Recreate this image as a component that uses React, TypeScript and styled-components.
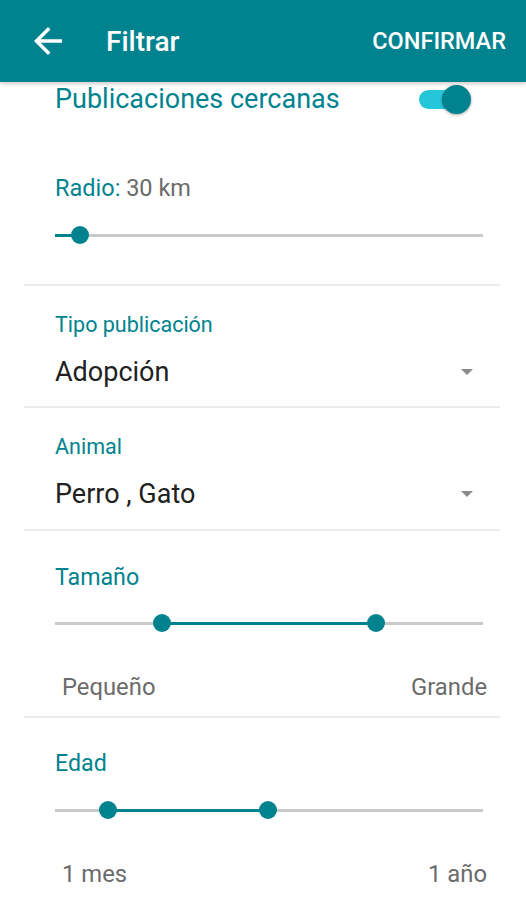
import React, { useState } from 'react';
import styled, { createGlobalStyle } from 'styled-components';

const palette = {
  teal: '#00838f',
  tealLight: '#26c6da',
  text: '#212121',
  gray: '#6b6b6b',
  track: '#c9c9c9',
  divider: '#ececec',
};

const GlobalStyle = createGlobalStyle`
  body {
    margin: 0;
    background: #ffffff;
    font-family: Roboto, 'Noto Sans', sans-serif;
  }
`;

const Page = styled.div`
  width: 526px;
  min-height: 900px;
  background: #ffffff;
`;

const Header = styled.header`
  height: 82px;
  background: ${palette.teal};
  display: flex;
  align-items: center;
  color: #ffffff;
  box-shadow: 0 2px 4px rgba(0, 0, 0, 0.2);
  position: relative;
  z-index: 1;
`;

const BackButton = styled.button`
  width: 42px;
  height: 42px;
  margin-left: 27px;
  padding: 0;
  border: 0;
  background: none;
  display: flex;
  align-items: center;
  justify-content: center;
  cursor: pointer;
`;

const Title = styled.h1`
  margin: 0 0 0 37px;
  font-size: 28px;
  font-weight: 500;
  flex: 1;
`;

const ConfirmButton = styled.button`
  border: 0;
  background: none;
  color: #ffffff;
  font-family: Roboto, sans-serif;
  font-size: 23.5px;
  font-weight: 500;
  padding: 0;
  margin-right: 20px;
  cursor: pointer;
`;

const Content = styled.div`
  padding: 0 26px 0 24px;
`;

const Section = styled.section<{ $top: number; $bottom: number; $last?: boolean }>`
  padding: ${(p) => p.$top}px 0 ${(p) => p.$bottom}px 31px;
  border-bottom: ${(p) => (p.$last ? 'none' : `2px solid ${palette.divider}`)};
  display: flex;
  flex-direction: column;
`;

const ToggleRow = styled.div`
  height: 34px;
  display: flex;
  align-items: center;
  justify-content: space-between;
  padding-right: 29px;
  margin-bottom: 60px;
`;

const ToggleLabel = styled.span`
  font-size: 27px;
  color: ${palette.teal};
`;

const Switch = styled.button<{ $on: boolean }>`
  position: relative;
  width: 52px;
  height: 29px;
  border: 0;
  padding: 0;
  background: none;
  cursor: pointer;

  &::before {
    content: '';
    position: absolute;
    left: 0;
    top: 5px;
    width: 46px;
    height: 19px;
    border-radius: 10px;
    background: ${(p) => (p.$on ? palette.tealLight : '#bdbdbd')};
  }

  &::after {
    content: '';
    position: absolute;
    top: 0;
    left: ${(p) => (p.$on ? '23px' : '0')};
    width: 29px;
    height: 29px;
    border-radius: 50%;
    background: ${(p) => (p.$on ? palette.teal : '#f5f5f5')};
    box-shadow: 0 1px 3px rgba(0, 0, 0, 0.35);
  }
`;

const FieldLabel = styled.div<{ $size: number }>`
  font-size: ${(p) => p.$size}px;
  line-height: 24px;
  color: ${palette.teal};
`;

const LabelValue = styled.span`
  color: ${palette.gray};
`;

const SelectRow = styled.div`
  margin-top: 20px;
  height: 30px;
  display: flex;
  align-items: center;
  justify-content: space-between;
  padding-right: 27px;
  cursor: pointer;
`;

const SelectValue = styled.span`
  font-size: 27px;
  color: ${palette.text};
`;

const Caret = styled.span`
  width: 0;
  height: 0;
  border-left: 6px solid transparent;
  border-right: 6px solid transparent;
  border-top: 6px solid #8a8a8a;
`;

const SliderBox = styled.div<{ $gap: number }>`
  position: relative;
  height: 30px;
  margin: ${(p) => p.$gap}px 17px 0 0;
`;

const Track = styled.div`
  position: absolute;
  left: 0;
  right: 0;
  top: 14px;
  height: 3px;
  background: ${palette.track};
`;

const ActiveTrack = styled.div`
  position: absolute;
  top: 14px;
  height: 3px;
  background: ${palette.teal};
`;

const Thumb = styled.div`
  position: absolute;
  top: 6px;
  width: 18px;
  height: 18px;
  margin-left: -9px;
  border-radius: 50%;
  background: ${palette.teal};
`;

const RangeEnds = styled.div`
  margin-top: 37px;
  display: flex;
  justify-content: space-between;
  padding: 0 13px 0 7px;
  font-size: 23.8px;
  line-height: 24px;
  color: ${palette.gray};
`;

interface SliderProps {
  values: number[];
  gap: number;
}

const Slider: React.FC<SliderProps> = ({ values, gap }) => {
  const from = values.length > 1 ? values[0] : 0;
  const to = values[values.length - 1];
  return (
    <SliderBox $gap={gap}>
      <Track />
      <ActiveTrack style={{ left: `${from * 100}%`, width: `${(to - from) * 100}%` }} />
      {values.map((v) => (
        <Thumb key={v} style={{ left: `${v * 100}%` }} />
      ))}
    </SliderBox>
  );
};

const ArrowBack = () => (
  <svg width='42' height='42' viewBox='0 0 24 24' fill='#ffffff'>
    <path d='M20 11H7.83l5.59-5.59L12 4l-8 8 8 8 1.41-1.41L7.83 13H20v-2z' />
  </svg>
);

const App = () => {
  const [nearby, setNearby] = useState(true);
  return (
    <Page>
      <GlobalStyle />
      <Header>
        <BackButton aria-label='Volver'>
          <ArrowBack />
        </BackButton>
        <Title>Filtrar</Title>
        <ConfirmButton>CONFIRMAR</ConfirmButton>
      </Header>
      <Content>
        <Section $top={0} $bottom={34}>
          <ToggleRow>
            <ToggleLabel>Publicaciones cercanas</ToggleLabel>
            <Switch $on={nearby} onClick={() => setNearby(!nearby)} aria-label='Publicaciones cercanas' />
          </ToggleRow>
          <FieldLabel $size={23.5}>
            Radio: <LabelValue>30 km</LabelValue>
          </FieldLabel>
          <Slider values={[0.058]} gap={20} />
        </Section>
        <Section $top={27} $bottom={19}>
          <FieldLabel $size={21.5}>Tipo publicación</FieldLabel>
          <SelectRow>
            <SelectValue>Adopción</SelectValue>
            <Caret />
          </SelectRow>
        </Section>
        <Section $top={27} $bottom={20}>
          <FieldLabel $size={21.5}>Animal</FieldLabel>
          <SelectRow>
            <SelectValue>Perro , Gato</SelectValue>
            <Caret />
          </SelectRow>
        </Section>
        <Section $top={34} $bottom={17}>
          <FieldLabel $size={23.2}>Tamaño</FieldLabel>
          <Slider values={[0.25, 0.75]} gap={19} />
          <RangeEnds>
            <span>Pequeño</span>
            <span>Grande</span>
          </RangeEnds>
        </Section>
        <Section $top={33} $bottom={20} $last>
          <FieldLabel $size={23.2}>Edad</FieldLabel>
          <Slider values={[0.124, 0.498]} gap={20} />
          <RangeEnds>
            <span>1 mes</span>
            <span>1 año</span>
          </RangeEnds>
        </Section>
      </Content>
    </Page>
  );
};

export default App;
